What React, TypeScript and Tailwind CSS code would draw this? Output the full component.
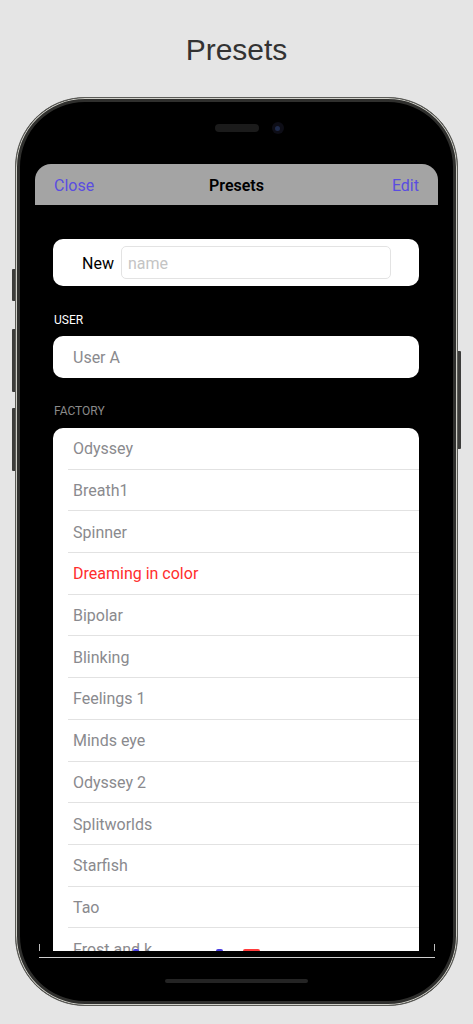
const factoryPresets = [
  "Odyssey",
  "Breath1",
  "Spinner",
  "Dreaming in color",
  "Bipolar",
  "Blinking",
  "Feelings 1",
  "Minds eye",
  "Odyssey 2",
  "Splitworlds",
  "Starfish",
  "Tao",
  "Frost and k",
];

// the one currently playing shows in red
const activePreset = "Dreaming in color";

export default function App() {
  return (
    <div className="flex h-[1024px] w-[473px] flex-col items-center overflow-hidden bg-[#e5e5e5] [font-family:Roboto,'Noto_Sans',sans-serif]">
      <h1 className="pt-[30px] text-[30px] leading-[40px] text-[#333] [font-family:'Liberation_Sans',Arial,sans-serif]">
        Presets
      </h1>

      {/* Phone body */}
      <div className="relative mt-[27px] flex h-[909px] w-[443px] flex-col items-center rounded-[70px] border border-[#5b5b57] bg-black shadow-[inset_0_0_0_1px_#cfcfc8,inset_0_0_0_4px_#2f2f2d]">
        {/* Side buttons */}
        <div className="absolute left-[-4px] top-[171px] h-[32px] w-[3px] rounded-l-[1px] bg-[#3c3c3a]" />
        <div className="absolute left-[-4px] top-[231px] h-[63px] w-[3px] rounded-l-[1px] bg-[#3c3c3a]" />
        <div className="absolute left-[-4px] top-[310px] h-[63px] w-[3px] rounded-l-[1px] bg-[#3c3c3a]" />
        <div className="absolute right-[-4px] top-[253px] h-[98px] w-[3px] rounded-r-[1px] bg-[#3c3c3a]" />

        {/* Speaker + camera */}
        <div className="mt-[24px] flex h-[12px] items-center gap-[13px]">
          <div className="w-[12px]" />
          <div className="h-[8px] w-[44px] rounded-full bg-[#1b1b1b]" />
          <div className="flex h-[12px] w-[12px] items-center justify-center rounded-full bg-[#0d0d16]">
            <div className="h-[5px] w-[5px] rounded-full bg-[#1e2a4a]" />
          </div>
        </div>

        {/* Sheet */}
        <div className="relative mt-[30px] flex h-[787px] w-[403px] flex-col overflow-hidden rounded-t-[16px]">
          <div className="grid h-[41px] shrink-0 grid-cols-3 items-center bg-[#a4a4a4] px-[19px] pt-[2px] text-[16px]">
            <span className="text-[#5a4de0]">Close</span>
            <span className="text-center font-semibold text-black">Presets</span>
            <span className="text-right text-[#5a4de0]">Edit</span>
          </div>

          <div className="flex flex-col pl-[18px] pr-[19px] pt-[34px]">
            {/* New preset */}
            <div className="flex h-[47px] items-center gap-[7px] rounded-[10px] bg-white pl-[29px] pr-[28px]">
              <span className="pt-[2px] text-[16px] text-black">New</span>
              <input
                placeholder="name"
                className="h-[33px] min-w-0 flex-1 rounded-[5px] border border-[#e3e3e3] px-[6px] pt-[2px] text-[16px] text-black outline-none placeholder:text-[#c4c4c4]"
              />
            </div>

            <p className="mt-[26px] pl-[1px] text-[12px] uppercase leading-[16px] text-white">User</p>
            <div className="mt-[8px] flex h-[42px] items-center rounded-[10px] bg-white pl-[20px] pt-[2px] text-[16px] text-[#8a8a8e]">
              User A
            </div>

            <p className="mt-[25px] pl-[1px] text-[12px] uppercase leading-[16px] text-[#8a8a8a]">Factory</p>
            <div className="mt-[9px] flex flex-col rounded-t-[10px] bg-white">
              {factoryPresets.map((name) => (
                <div
                  key={name}
                  className="ml-[15px] flex h-[41.7px] shrink-0 items-center border-b border-[#e2e2e2] pl-[5px] pt-[2px]"
                >
                  <span className={`text-[16px] ${name === activePreset ? "text-[#ff2d2d]" : "text-[#8a8a8e]"}`}>
                    {name}
                  </span>
                </div>
              ))}
            </div>
          </div>

          {/* bits of the player peeking through */}
          <div className="absolute bottom-0 left-[98px] h-[2px] w-[6px] rounded-t-full bg-[#4b3fe0]" />
          <div className="absolute bottom-0 left-[181px] h-[2px] w-[7px] rounded-t-full bg-[#4b3fe0]" />
          <div className="absolute bottom-0 left-[208px] h-[2px] w-[17px] rounded-t-[2px] bg-[#ff3b3b]" />
        </div>

        {/* Frame of the screen behind */}
        <div className="-mt-[7px] flex w-[396px] flex-col">
          <div className="h-[7px] border-x border-[#bdbdbd]" />
          <div className="mt-[6px] h-px bg-[#cfcfcf]" />
        </div>

        {/* Home indicator */}
        <div className="mt-[21px] h-[4px] w-[143px] rounded-full bg-[#242424]" />
      </div>
    </div>
  );
}
